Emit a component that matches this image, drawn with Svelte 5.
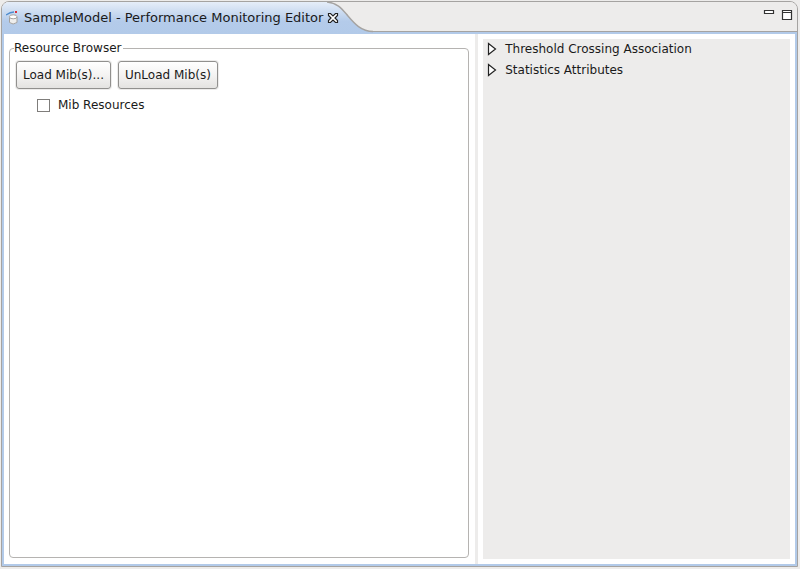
<script>
  let title = 'SampleModel - Performance Monitoring Editor';
  let sections = ['Threshold Crossing Association', 'Statistics Attributes'];

  let mibResources = $state(false);
  let expanded = $state({});

  function toggle(name) {
    expanded[name] = !expanded[name];
  }
</script>

<main class="editor">
  <header class="tab-bar">
    <div class="tab">
      <svg class="model-icon" viewBox="0 0 14 16" aria-hidden="true">
        <path d="M0 5 Q4 2 8 2" fill="none" stroke="#4d8cce" stroke-width="1.4" />
        <path d="M9 1h2v2H9z" fill="#d8303d" />
        <path d="M3.5 7v5.5q3.5 3 7.5 0V7" fill="#eeeeed" stroke="#a3a19f" />
        <ellipse cx="7.2" cy="6.8" rx="3.8" ry="2" fill="#fff" stroke="#a3a19f" />
      </svg>
      <span class="title">{title}</span>
      <button class="icon-btn close" aria-label="Close">
        <svg width="12" height="12" viewBox="0 0 12 12">
          <path d="M1.5 1.5h2l2.5 2.5 2.5-2.5h2v2L8 6l2.5 2.5v2h-2L6 8l-2.5 2.5h-2v-2L4 6 1.5 3.5z" fill="#fff" stroke="#222" stroke-width="1.2" />
        </svg>
      </button>
      <svg class="tab-curve" viewBox="0 0 46 32" aria-hidden="true">
        <defs>
          <linearGradient id="tab-fill" x1="0" y1="0" x2="0" y2="1">
            <stop offset="0" stop-color="#e6eef9" />
            <stop offset="0.6" stop-color="#b4cbea" />
            <stop offset="1" stop-color="#b2cae9" />
          </linearGradient>
        </defs>
        <path d="M0 0 C11 1 15 7 21 14 S34 29.5 46 29.5 V32 H0z" fill="url(#tab-fill)" />
        <path d="M0 0 C11 1 15 7 21 14 S34 29.5 46 29.5" fill="none" stroke="#a5a3a1" stroke-width="1.4" />
      </svg>
    </div>
    <div class="window-actions">
      <button class="icon-btn" aria-label="Minimize">
        <svg width="12" height="12" viewBox="0 0 12 12">
          <path d="M1.5 2.5h9v3h-9z" fill="#fff" stroke="#333" stroke-width="1.2" />
        </svg>
      </button>
      <button class="icon-btn" aria-label="Maximize">
        <svg width="12" height="12" viewBox="0 0 12 12">
          <path d="M1.5 2.5h9v9h-9zM1.5 4.5h9" fill="#fff" stroke="#333" stroke-width="1.2" />
        </svg>
      </button>
    </div>
  </header>

  <div class="content">
    <section class="browser-pane">
      <fieldset>
        <legend>Resource Browser</legend>
        <div class="buttons">
          <button class="btn">Load Mib(s)...</button>
          <button class="btn">UnLoad Mib(s)</button>
        </div>
        <label class="resource">
          <input type="checkbox" bind:checked={mibResources} />
          <span>Mib Resources</span>
        </label>
      </fieldset>
    </section>
    <div class="sash"></div>
    <section class="details-pane">
      <div class="sections">
        {#each sections as name}
          <button class="section" aria-expanded={!!expanded[name]} onclick={() => toggle(name)}>
            <svg class:open={expanded[name]} width="10" height="14" viewBox="0 0 10 14" aria-hidden="true">
              <path d="M1.5 1.5v11L8.5 7z" fill="#fff" stroke="#222" stroke-width="1.2" />
            </svg>
            <span>{name}</span>
          </button>
        {/each}
      </div>
    </section>
  </div>
</main>

<style>
  :global(body) {
    background: #edeceb;
  }

  .editor {
    display: flex;
    flex-direction: column;
    box-sizing: border-box;
    height: calc(100vh - 3px);
    margin: 1px 2px 2px 1px;
    border: 1px solid #a5a3a1;
    border-radius: 8px 8px 0 0;
    overflow: hidden;
    font-family: 'DejaVu Sans', sans-serif;
    font-size: 12px;
    line-height: 16px;
    color: #1a1a1a;
  }

  button {
    font: inherit;
    color: inherit;
  }

  /* --- Tab bar --- */
  .tab-bar {
    display: flex;
    flex: none;
    height: 32px;
    background: linear-gradient(#edeceb 29px, #a5a3a1 29px, #a5a3a1 30px, #b2cae9 30px);
  }

  /* The fill stops where the curved edge takes over */
  .tab {
    position: relative;
    display: flex;
    align-items: center;
    gap: 4px;
    padding: 0 34px 0 4px;
    background: linear-gradient(#e6eef9, #b4cbea 60%, #b2cae9) 0 0 / calc(100% - 46px) 100% no-repeat;
  }

  .model-icon {
    width: 14px;
    height: 16px;
  }

  .title {
    font-size: 13px;
    white-space: nowrap;
  }

  .tab-curve {
    position: absolute;
    top: 0;
    right: 0;
    width: 46px;
    height: 32px;
  }

  .icon-btn {
    display: flex;
    padding: 0;
    border: none;
    background: none;
  }

  .close {
    position: relative;
    z-index: 1;
  }

  .window-actions {
    display: flex;
    align-items: flex-start;
    gap: 6px;
    margin-left: auto;
    padding: 6px 4px 0 0;
  }

  /* --- Panes --- */
  .content {
    display: flex;
    flex: 1;
    min-height: 0;
    border: 2px solid #b2cae9;
    border-top: none;
    background: #fff;
  }

  .browser-pane {
    display: flex;
    flex: 3;
    min-width: 0;
    padding: 6px 6px 6px 5px;
  }

  fieldset {
    flex: 1;
    min-width: 0;
    margin: 0;
    padding: 5px 6px;
    border: 1px solid #b5b3b1;
    border-radius: 4px;
  }

  legend {
    margin-left: -2px;
    padding: 0 2px 0 0;
  }

  .buttons {
    display: flex;
    gap: 7px;
  }

  .btn {
    height: 28px;
    padding: 0 6px;
    border: 1px solid #91908e;
    border-radius: 3px;
    background: linear-gradient(#fff, #f4f3f2 50%, #e4e3e1);
    box-shadow: 0 0 0 1px #edeceb;
    white-space: nowrap;
  }

  .resource {
    display: flex;
    align-items: center;
    gap: 8px;
    width: fit-content;
    margin: 8px 0 0 21px;
  }

  .resource input {
    appearance: none;
    width: 13px;
    height: 13px;
    margin: 0;
    border: 1px solid #7f7d7b;
    background: #fff;
  }

  .resource input:checked {
    background: #86abd9;
  }

  .sash {
    width: 3px;
    background: #edeceb;
  }

  .details-pane {
    display: flex;
    flex: 2;
    min-width: 0;
    padding: 5px;
  }

  .sections {
    display: flex;
    flex: 1;
    flex-direction: column;
    align-items: flex-start;
    gap: 1px;
    background: #edeceb;
  }

  .section {
    display: flex;
    align-items: center;
    gap: 8px;
    height: 20px;
    padding: 0 4px;
    border: none;
    background: none;
    white-space: nowrap;
  }

  .section svg.open {
    transform: rotate(90deg);
  }
</style>
